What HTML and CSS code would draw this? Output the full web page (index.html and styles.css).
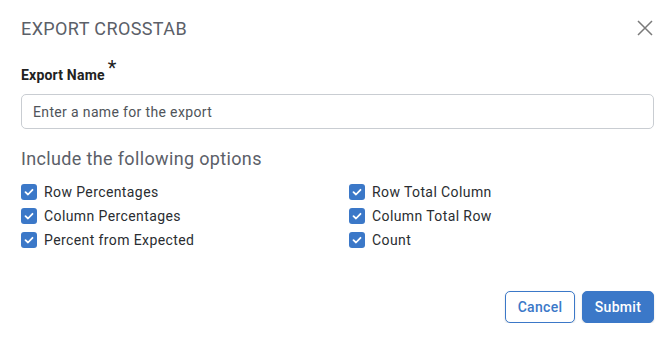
FILE: index.html
```
<!DOCTYPE html>
<html>
<head>
    <link rel="stylesheet" href="styles.css">
</head>
<body>
<div class="dialog">
    <div class="header">
        <span class="title">EXPORT CROSSTAB</span>
        <svg class="close" width="16" height="16" viewBox="0 0 16 16">
            <path d="M1 1 L15 15 M15 1 L1 15" stroke="#7a7a7a" stroke-width="1.5" fill="none"/>
        </svg>
    </div>
    <div class="label">Export Name<span class="req">*</span></div>
    <input class="name-input" type="text" placeholder="Enter a name for the export">
    <div class="subtitle">Include the following options</div>
    <div class="options">
        <div class="opt"><span class="box"></span>Row Percentages</div>
        <div class="opt"><span class="box"></span>Row Total Column</div>
        <div class="opt"><span class="box"></span>Column Percentages</div>
        <div class="opt"><span class="box"></span>Column Total Row</div>
        <div class="opt"><span class="box"></span>Percent from Expected</div>
        <div class="opt"><span class="box"></span>Count</div>
    </div>
    <div class="actions">
        <button class="btn cancel">Cancel</button>
        <button class="btn submit">Submit</button>
    </div>
</div>
</body>
</html>
```
FILE: styles.css
```
* {
    box-sizing: border-box;
    font-family: Roboto, "Liberation Sans", sans-serif;
}

body {
    margin: 0;
    background: #ffffff;
}

.dialog {
    padding: 16px 18px 0 21px;
}

.header {
    display: flex;
    justify-content: space-between;
    align-items: center;
    height: 24px;
}

.title {
    font-size: 18px;
    letter-spacing: 0.4px;
    color: #5b6068;
}

.close {
    margin-right: 1px;
}

.label {
    margin-top: 26px;
    font-size: 14px;
    font-weight: bold;
    letter-spacing: 0.2px;
    color: #222222;
    line-height: 18px;
    height: 18px;
}

.req {
    font-weight: normal;
    font-size: 20px;
    line-height: 0;
    vertical-align: 5px;
    margin-left: 3px;
}

.name-input {
    display: block;
    width: 633px;
    height: 35px;
    margin-top: 10px;
    padding: 0 11px;
    font-size: 14px;
    letter-spacing: 0.35px;
    border: 1px solid #c9cdd2;
    border-radius: 5px;
    outline: none;
}

.name-input::placeholder {
    color: #4f545a;
}

.subtitle {
    margin-top: 18px;
    font-size: 18px;
    letter-spacing: 0.35px;
    color: #5b6068;
    line-height: 24px;
}

.options {
    display: grid;
    grid-template-columns: 328px 1fr;
    row-gap: 6px;
    margin-top: 12px;
}

.opt {
    display: flex;
    align-items: center;
    height: 18px;
    font-size: 14px;
    letter-spacing: 0.4px;
    color: #2a2d31;
}

.box {
    width: 16px;
    height: 16px;
    margin-right: 7px;
    border-radius: 3px;
    background: #3b78c8 url("data:image/svg+xml;utf8,<svg xmlns='http://www.w3.org/2000/svg' width='16' height='16'><path d='M4.5 8.2 L7 10.5 L11.5 5.8' stroke='white' stroke-width='1.8' fill='none' stroke-linecap='round' stroke-linejoin='round'/></svg>") no-repeat center;
}

.actions {
    display: flex;
    justify-content: flex-end;
    gap: 7px;
    margin-top: 42px;
}

.btn {
    height: 32px;
    font-size: 14px;
    font-weight: 500;
    letter-spacing: 0.3px;
    border-radius: 5px;
    box-shadow: 0 1px 2px rgba(0, 0, 0, 0.15);
    cursor: pointer;
}

.cancel {
    width: 70px;
    background: #ffffff;
    color: #3b78c8;
    border: 1px solid #3b78c8;
}

.submit {
    width: 72px;
    background: #3b78c8;
    color: #ffffff;
    border: 1px solid #3b78c8;
}
```
